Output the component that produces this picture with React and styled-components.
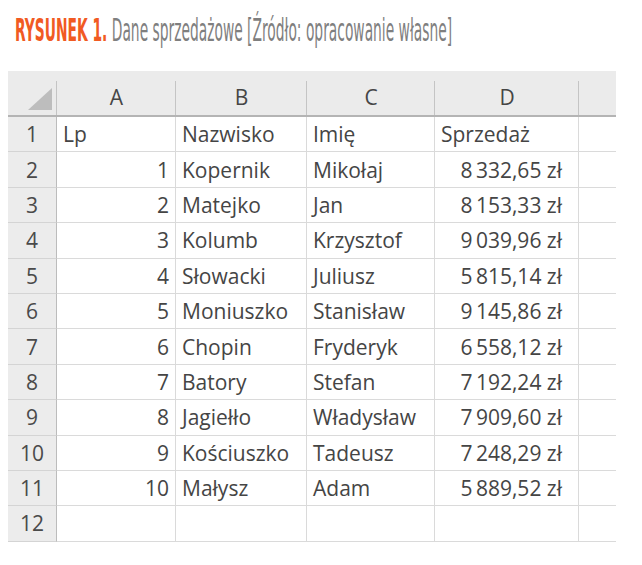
import React from 'react';
import styled, { createGlobalStyle } from 'styled-components';

const GlobalStyle = createGlobalStyle`
  body {
    margin: 0;
    background: #fff;
  }
`;

const Page = styled.div`
  width: 642px;
  height: 565px;
  overflow: hidden;
  background: #fff;
`;

const CaptionRow = styled.div`
  padding: 12px 0 0 15px;
  height: 59px;
  box-sizing: border-box;
`;

const Caption = styled.div`
  font-family: "Liberation Sans Narrow", "DejaVu Sans Condensed", sans-serif;
  font-size: 32px;
  line-height: 36px;
  white-space: nowrap;
  transform: scaleX(0.48);
  transform-origin: left top;
  color: #7f7f7f;

  strong {
    color: #f15a22;
    font-weight: 700;
  }
`;

const Sheet = styled.div`
  margin: 12px 0 0 8px;
  display: grid;
  grid-template-columns: 49px 119px 131px 128px 144px 37px;
  grid-auto-rows: 35.4px;
  grid-template-rows: 46px;
  font-family: "Open Sans", sans-serif;
  font-size: 21px;
  color: #454545;
`;

const ColHead = styled.div`
  box-sizing: border-box;
  display: flex;
  align-items: center;
  justify-content: center;
  padding-top: 8px;
  border-bottom: 2px solid #b4b4b4;
  background: ${p => p.$last ? '#ebebeb' : 'linear-gradient(#c4c4c4, #c4c4c4) right bottom / 1px 34px no-repeat, #ebebeb'};
`;

const Corner = styled(ColHead)`
  justify-content: flex-end;
  align-items: flex-end;
  padding: 0 5px 5px 0;
`;

const Triangle = styled.div`
  width: 24px;
  height: 22px;
  background: #bdbdbd;
  clip-path: polygon(100% 0, 100% 100%, 0 100%);
`;

const RowHead = styled.div`
  box-sizing: border-box;
  display: flex;
  align-items: center;
  justify-content: center;
  background: #ececec;
  border-right: 1px solid #bcbcbc;
  border-bottom: 1px solid #d4d4d4;
  color: #4a4a4a;
`;

const Cell = styled.div`
  box-sizing: border-box;
  display: flex;
  align-items: center;
  justify-content: ${p => p.$num ? 'flex-end' : 'flex-start'};
  padding: 0 ${p => p.$pr || 6}px 0 6px;
  white-space: nowrap;
  border-right: ${p => p.$last ? 'none' : '1px solid #dadada'};
  border-bottom: 1px solid #dadada;
`;

const sep = '\u2009';
const rows = [
  ['1', 'Kopernik', 'Mikołaj', `8${sep}332,65 zł`],
  ['2', 'Matejko', 'Jan', `8${sep}153,33 zł`],
  ['3', 'Kolumb', 'Krzysztof', `9${sep}039,96 zł`],
  ['4', 'Słowacki', 'Juliusz', `5${sep}815,14 zł`],
  ['5', 'Moniuszko', 'Stanisław', `9${sep}145,86 zł`],
  ['6', 'Chopin', 'Fryderyk', `6${sep}558,12 zł`],
  ['7', 'Batory', 'Stefan', `7${sep}192,24 zł`],
  ['8', 'Jagiełło', 'Władysław', `7${sep}909,60 zł`],
  ['9', 'Kościuszko', 'Tadeusz', `7${sep}248,29 zł`],
  ['10', 'Małysz', 'Adam', `5${sep}889,52 zł`],
];

export default function App() {
  return (
    <Page>
      <GlobalStyle />
      <CaptionRow>
        <Caption>
          <strong>RYSUNEK 1.</strong> Dane sprzedażowe [Źródło: opracowanie własne]
        </Caption>
      </CaptionRow>
      <Sheet>
        <Corner><Triangle /></Corner>
        {['A', 'B', 'C', 'D'].map(l => <ColHead key={l}>{l}</ColHead>)}
        <ColHead $last />

        <RowHead>1</RowHead>
        <Cell>Lp</Cell>
        <Cell>Nazwisko</Cell>
        <Cell>Imię</Cell>
        <Cell>Sprzedaż</Cell>
        <Cell $last />

        {rows.map(([lp, name, first, money], i) => (
          <React.Fragment key={lp}>
            <RowHead>{i + 2}</RowHead>
            <Cell $num>{lp}</Cell>
            <Cell>{name}</Cell>
            <Cell>{first}</Cell>
            <Cell $num $pr={16}>{money}</Cell>
            <Cell $last />
          </React.Fragment>
        ))}

        <RowHead>12</RowHead>
        <Cell />
        <Cell />
        <Cell />
        <Cell />
        <Cell $last />
      </Sheet>
    </Page>
  );
}
